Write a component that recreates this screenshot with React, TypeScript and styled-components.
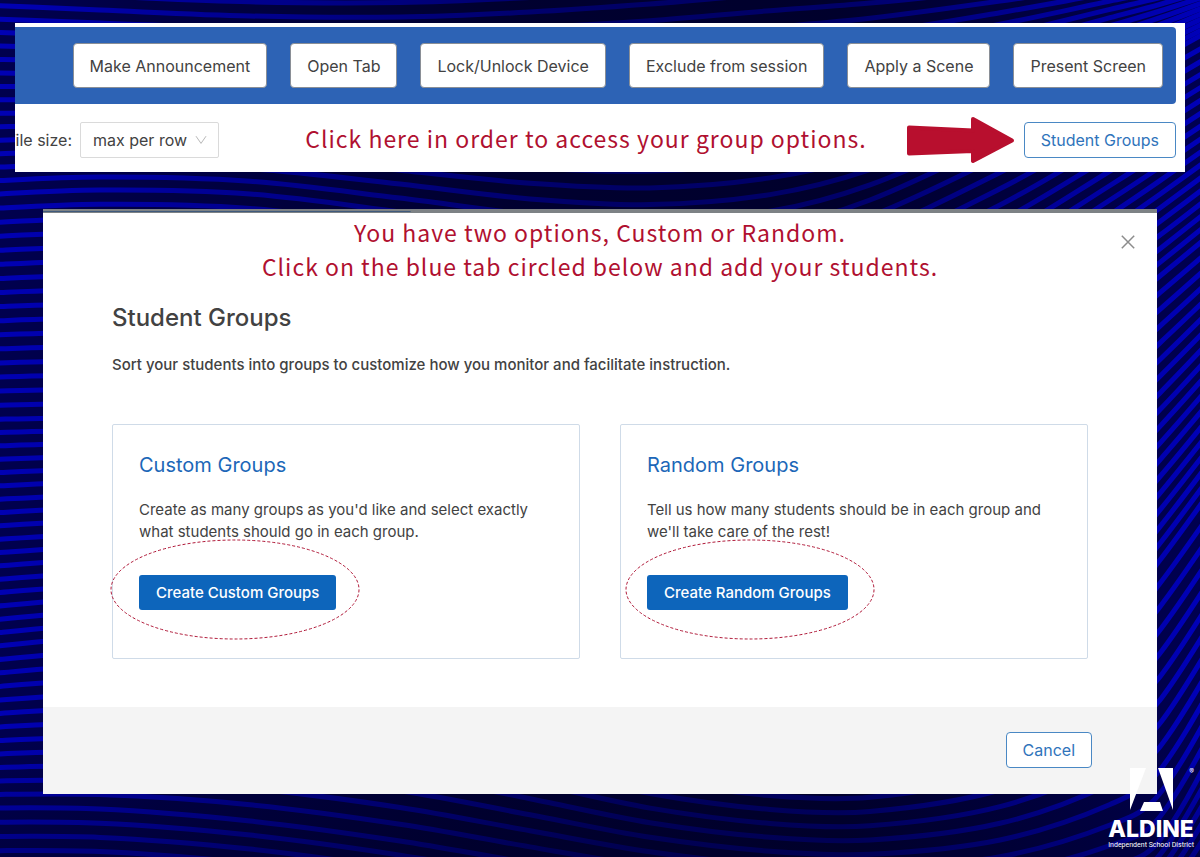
import React from "react";
import styled, { createGlobalStyle, css } from "styled-components";

const GlobalStyle = createGlobalStyle`
  *, *::before, *::after { box-sizing: border-box; }
  body {
    margin: 0;
    background: #00003c;
    color: #424242;
    font-family: Inter, "Liberation Sans", sans-serif;
    font-size: 16px;
    line-height: 22px;
  }
  h1, h2, p { margin: 0; }
  button, select { font: inherit; }
`;

const Page = styled.main`
  position: relative;
  display: flex;
  flex-direction: column;
  min-height: 100vh;
  padding: 23px 15px 63px;
  overflow: hidden;
`;

const Backdrop = styled.svg`
  position: absolute;
  inset: 0;
  width: 100%;
  height: 100%;
`;

const ToolbarShot = styled.section`
  position: relative;
  background: #fff;
  padding-top: 4px;
`;

const Toolbar = styled.div`
  display: flex;
  justify-content: flex-end;
  align-items: center;
  gap: 23px;
  height: 77px;
  margin-right: 9px;
  padding-right: 13px;
  background: #2d63b5;
  border-radius: 0 4px 4px 0;
`;

const ToolButton = styled.button`
  height: 45px;
  padding: 0 16px;
  border: 1px solid #8a8f96;
  border-radius: 4px;
  background: #fff;
  color: #424242;
  white-space: nowrap;
`;

const OptionsRow = styled.div`
  display: flex;
  align-items: center;
  height: 68px;
  padding: 4px 9px 0 0;
`;

const SizeLabel = styled.label`
  display: flex;
  justify-content: flex-end;
  width: 57px;
  margin-right: 8px;
  overflow: hidden;
  white-space: nowrap;
`;

const SelectWrap = styled.div`
  display: grid;
  align-items: center;
  width: 139px;
  > * { grid-area: 1 / 1; }
  > svg { justify-self: end; margin-right: 12px; pointer-events: none; }
`;

const Select = styled.select`
  appearance: none;
  width: 100%;
  height: 36px;
  padding: 0 12px;
  border: 1px solid #dadada;
  border-radius: 2px;
  background: #fff;
  color: #424242;
`;

const captionFont = css`
  color: #b01030;
  font-family: "Noto Sans CJK SC", "Noto Sans", sans-serif;
  font-size: 23px;
  line-height: 34px;
  letter-spacing: 1px;
`;

const RowCaption = styled.p`
  ${captionFont}
  flex: 1;
  padding: 0 40px 4px 0;
  text-align: right;
  white-space: nowrap;
`;

const Arrow = styled.svg`
  flex: none;
  width: 108px;
  height: 48px;
  margin-right: 9px;
`;

const OutlineButton = styled.button`
  height: 36px;
  padding: 0 16px;
  border: 1px solid #4a88c4;
  border-radius: 4px;
  background: #fff;
  color: #2f74bb;
  white-space: nowrap;
`;

const Modal = styled.section`
  position: relative;
  margin: 37px 28px 0;
  background: #fff;
`;

const PageEdge = styled.div`
  height: 4px;
  background: linear-gradient(#3f5a7c, #3f5a7c) 0 2px / 33% 1px no-repeat #7d8285;
`;

const ModalBody = styled.div`
  padding: 2px 69px 48px;
`;

const ModalCaption = styled.p`
  ${captionFont}
  text-align: center;
`;

const CloseButton = styled.button`
  position: absolute;
  top: 23px;
  right: 19px;
  display: grid;
  place-items: center;
  width: 20px;
  height: 20px;
  padding: 0;
  border: 0;
  background: none;
`;

const Title = styled.h1`
  margin-top: 19px;
  font-size: 24px;
  line-height: 32px;
  font-weight: 500;
`;

const Intro = styled.p`
  margin-top: 20px;
  font-size: 15px;
  font-weight: 500;
`;

const Cards = styled.div`
  display: grid;
  grid-template-columns: 1fr 1fr;
  gap: 40px;
  margin-top: 48px;
`;

const Card = styled.article`
  position: relative;
  padding: 26px 26px 48px;
  border: 1px solid #cfdbe8;
  border-radius: 2px;
`;

const CardTitle = styled.h2`
  color: #1c67b8;
  font-size: 20px;
  line-height: 28px;
  font-weight: 400;
`;

const CardText = styled.p`
  margin-top: 20px;
  font-size: 15px;
`;

const PrimaryButton = styled.button`
  display: block;
  height: 35px;
  margin-top: 32px;
  padding: 0 17px;
  border: 0;
  border-radius: 3px;
  background: #0d65bb;
  color: #fff;
  font-size: 15px;
  font-weight: 500;
  white-space: nowrap;
`;

const Circled = styled.svg<{ $left: number }>`
  position: absolute;
  top: 114px;
  left: ${(p) => p.$left}px;
  width: 250px;
  height: 101px;
  pointer-events: none;
`;

const ModalFooter = styled.footer`
  display: flex;
  justify-content: flex-end;
  align-items: center;
  height: 87px;
  padding: 0 65px 2px 0;
  background: #f4f4f4;
`;

const Brand = styled.div`
  position: absolute;
  right: 6px;
  bottom: 8px;
  display: flex;
  flex-direction: column;
  align-items: center;
  color: #fff;
  white-space: nowrap;
`;

const BrandName = styled.strong`
  margin-top: 6px;
  font-size: 23px;
  line-height: 24px;
  font-weight: 800;
`;

const BrandLine = styled.span`
  font-family: Roboto, sans-serif;
  font-size: 7px;
  line-height: 8px;
`;

const Registered = styled.span`
  position: absolute;
  top: 0;
  right: 0;
  font-size: 7px;
  line-height: 8px;
`;

/* Each row is one guide line of the wave field: its height at every stop. */
const stops = [-40, 100, 250, 400, 530, 650, 770, 870, 1000, 1110, 1160, 1240];
const guides = [
  [-150, -144, -140, -142, -148, -156, -162, -168, -174, -178, -180, -184],
  [4, 10, 16, 17, 12, 4, -6, -12, -22, -32, -36, -44],
  [196, 190, 194, 212, 230, 238, 228, 200, 140, 84, 58, 14],
  [420, 418, 424, 440, 462, 482, 480, 462, 400, 316, 276, 210],
  [650, 636, 626, 640, 670, 706, 726, 726, 690, 620, 560, 450],
  [808, 809, 821, 841, 863, 881, 893, 897, 890, 866, 840, 700],
  [1050, 1050, 1060, 1080, 1105, 1120, 1130, 1134, 1126, 1106, 1090, 1050],
];
const linesBetween = [11, 14, 16, 17, 12, 17];

function curve(ys: number[]) {
  let d = `M${stops[0]} ${ys[0].toFixed(1)}`;
  for (let i = 0; i < stops.length - 1; i++) {
    const a = Math.max(i - 1, 0);
    const b = Math.min(i + 2, stops.length - 1);
    const h = (stops[i + 1] - stops[i]) / 3;
    const s0 = (ys[i + 1] - ys[a]) / (stops[i + 1] - stops[a]);
    const s1 = (ys[b] - ys[i]) / (stops[b] - stops[i]);
    d += `C${(stops[i] + h).toFixed(1)} ${(ys[i] + s0 * h).toFixed(1)} ${(stops[i + 1] - h).toFixed(1)} ${(
      ys[i + 1] - s1 * h
    ).toFixed(1)} ${stops[i + 1]} ${ys[i + 1].toFixed(1)}`;
  }
  return d;
}

const waves = guides.slice(0, -1).flatMap((row, g) =>
  Array.from({ length: linesBetween[g] }, (_, k) => {
    const t = k / linesBetween[g];
    return curve(row.map((y, i) => y + (guides[g + 1][i] - y) * t));
  })
);

function Waves() {
  return (
    <Backdrop viewBox="0 0 1200 857" preserveAspectRatio="xMidYMid slice" aria-hidden="true">
      <defs>
        <linearGradient id="deep" x1="0" x2="1200" y1="0" y2="0" gradientUnits="userSpaceOnUse">
          <stop offset="0" stopColor="#00004e" />
          <stop offset="0.4" stopColor="#000030" />
          <stop offset="0.7" stopColor="#00002c" />
          <stop offset="1" stopColor="#000050" />
        </linearGradient>
        <linearGradient id="crest" x1="0" x2="1200" y1="0" y2="0" gradientUnits="userSpaceOnUse">
          <stop offset="0" stopColor="#0000b4" />
          <stop offset="0.2" stopColor="#000090" />
          <stop offset="0.5" stopColor="#000066" />
          <stop offset="0.7" stopColor="#000068" />
          <stop offset="0.88" stopColor="#00009a" />
          <stop offset="1" stopColor="#0000b8" />
        </linearGradient>
        <linearGradient id="dusk" x1="0" x2="0" y1="740" y2="857" gradientUnits="userSpaceOnUse">
          <stop offset="0" stopColor="#000028" stopOpacity="0" />
          <stop offset="1" stopColor="#000028" stopOpacity="0.35" />
        </linearGradient>
      </defs>
      <rect width="1200" height="857" fill="url(#deep)" />
      <g fill="none" stroke="url(#crest)" strokeWidth="5">
        {waves.map((d, i) => (
          <path key={i} d={d} />
        ))}
      </g>
      <rect y="740" width="1200" height="117" fill="url(#dusk)" />
    </Backdrop>
  );
}

const tools = [
  "Make Announcement",
  "Open Tab",
  "Lock/Unlock Device",
  "Exclude from session",
  "Apply a Scene",
  "Present Screen",
];

const groupTypes = [
  {
    title: "Custom Groups",
    text: "Create as many groups as you'd like and select exactly what students should go in each group.",
    action: "Create Custom Groups",
    circleLeft: -3,
  },
  {
    title: "Random Groups",
    text: "Tell us how many students should be in each group and we'll take care of the rest!",
    action: "Create Random Groups",
    circleLeft: 4,
  },
];

export default function App() {
  return (
    <>
      <GlobalStyle />
      <Page>
        <Waves />
        <ToolbarShot>
          <Toolbar>
            {tools.map((label) => (
              <ToolButton key={label} type="button">
                {label}
              </ToolButton>
            ))}
          </Toolbar>
          <OptionsRow>
            <SizeLabel htmlFor="tile-size">Tile size:</SizeLabel>
            <SelectWrap>
              <Select id="tile-size">
                <option>max per row</option>
              </Select>
              <svg width="12" height="10" viewBox="0 0 12 10" fill="none" stroke="#b8b8b8">
                <path d="M1 1.2 6 8.4 11 1.2" />
              </svg>
            </SelectWrap>
            <RowCaption>Click here in order to access your group options.</RowCaption>
            <Arrow viewBox="0 0 108 48" aria-hidden="true">
              <path
                d="M2 11.500 66 14.500V3L105 24.500 66 45V35L2 37.500Z"
                fill="#b80f2e"
                stroke="#b80f2e"
                strokeWidth="4"
                strokeLinejoin="round"
              />
            </Arrow>
            <OutlineButton type="button">Student Groups</OutlineButton>
          </OptionsRow>
        </ToolbarShot>

        <Modal>
          <PageEdge />
          <CloseButton type="button" aria-label="Close">
            <svg width="14" height="14" viewBox="0 0 14 14" stroke="#8c8c8c" strokeWidth="1.500">
              <path d="M.8.8l12.400 12.400M13.200.8.8 13.200" />
            </svg>
          </CloseButton>
          <ModalBody>
            <ModalCaption>
              You have two options, Custom or Random.
              <br />
              Click on the blue tab circled below and add your students.
            </ModalCaption>
            <Title>Student Groups</Title>
            <Intro>Sort your students into groups to customize how you monitor and facilitate instruction.</Intro>
            <Cards>
              {groupTypes.map((g) => (
                <Card key={g.title}>
                  <CardTitle>{g.title}</CardTitle>
                  <CardText>{g.text}</CardText>
                  <PrimaryButton type="button">{g.action}</PrimaryButton>
                  <Circled $left={g.circleLeft} viewBox="0 0 250 101" aria-hidden="true">
                    <ellipse
                      cx="125"
                      cy="50.500"
                      rx="124"
                      ry="49.500"
                      fill="none"
                      stroke="#b01838"
                      strokeDasharray="3 2"
                    />
                  </Circled>
                </Card>
              ))}
            </Cards>
          </ModalBody>
          <ModalFooter>
            <OutlineButton type="button">Cancel</OutlineButton>
          </ModalFooter>
        </Modal>

        <Brand>
          <svg width="43" height="43" viewBox="0 0 43 43" fill="#fff" aria-hidden="true">
            <path d="M0 0H16L0 42ZM28 0H43V42ZM14 34H30L33 43H10Z" />
          </svg>
          <BrandName>ALDINE</BrandName>
          <BrandLine>Independent School District</BrandLine>
          <Registered>®</Registered>
        </Brand>
      </Page>
    </>
  );
}
